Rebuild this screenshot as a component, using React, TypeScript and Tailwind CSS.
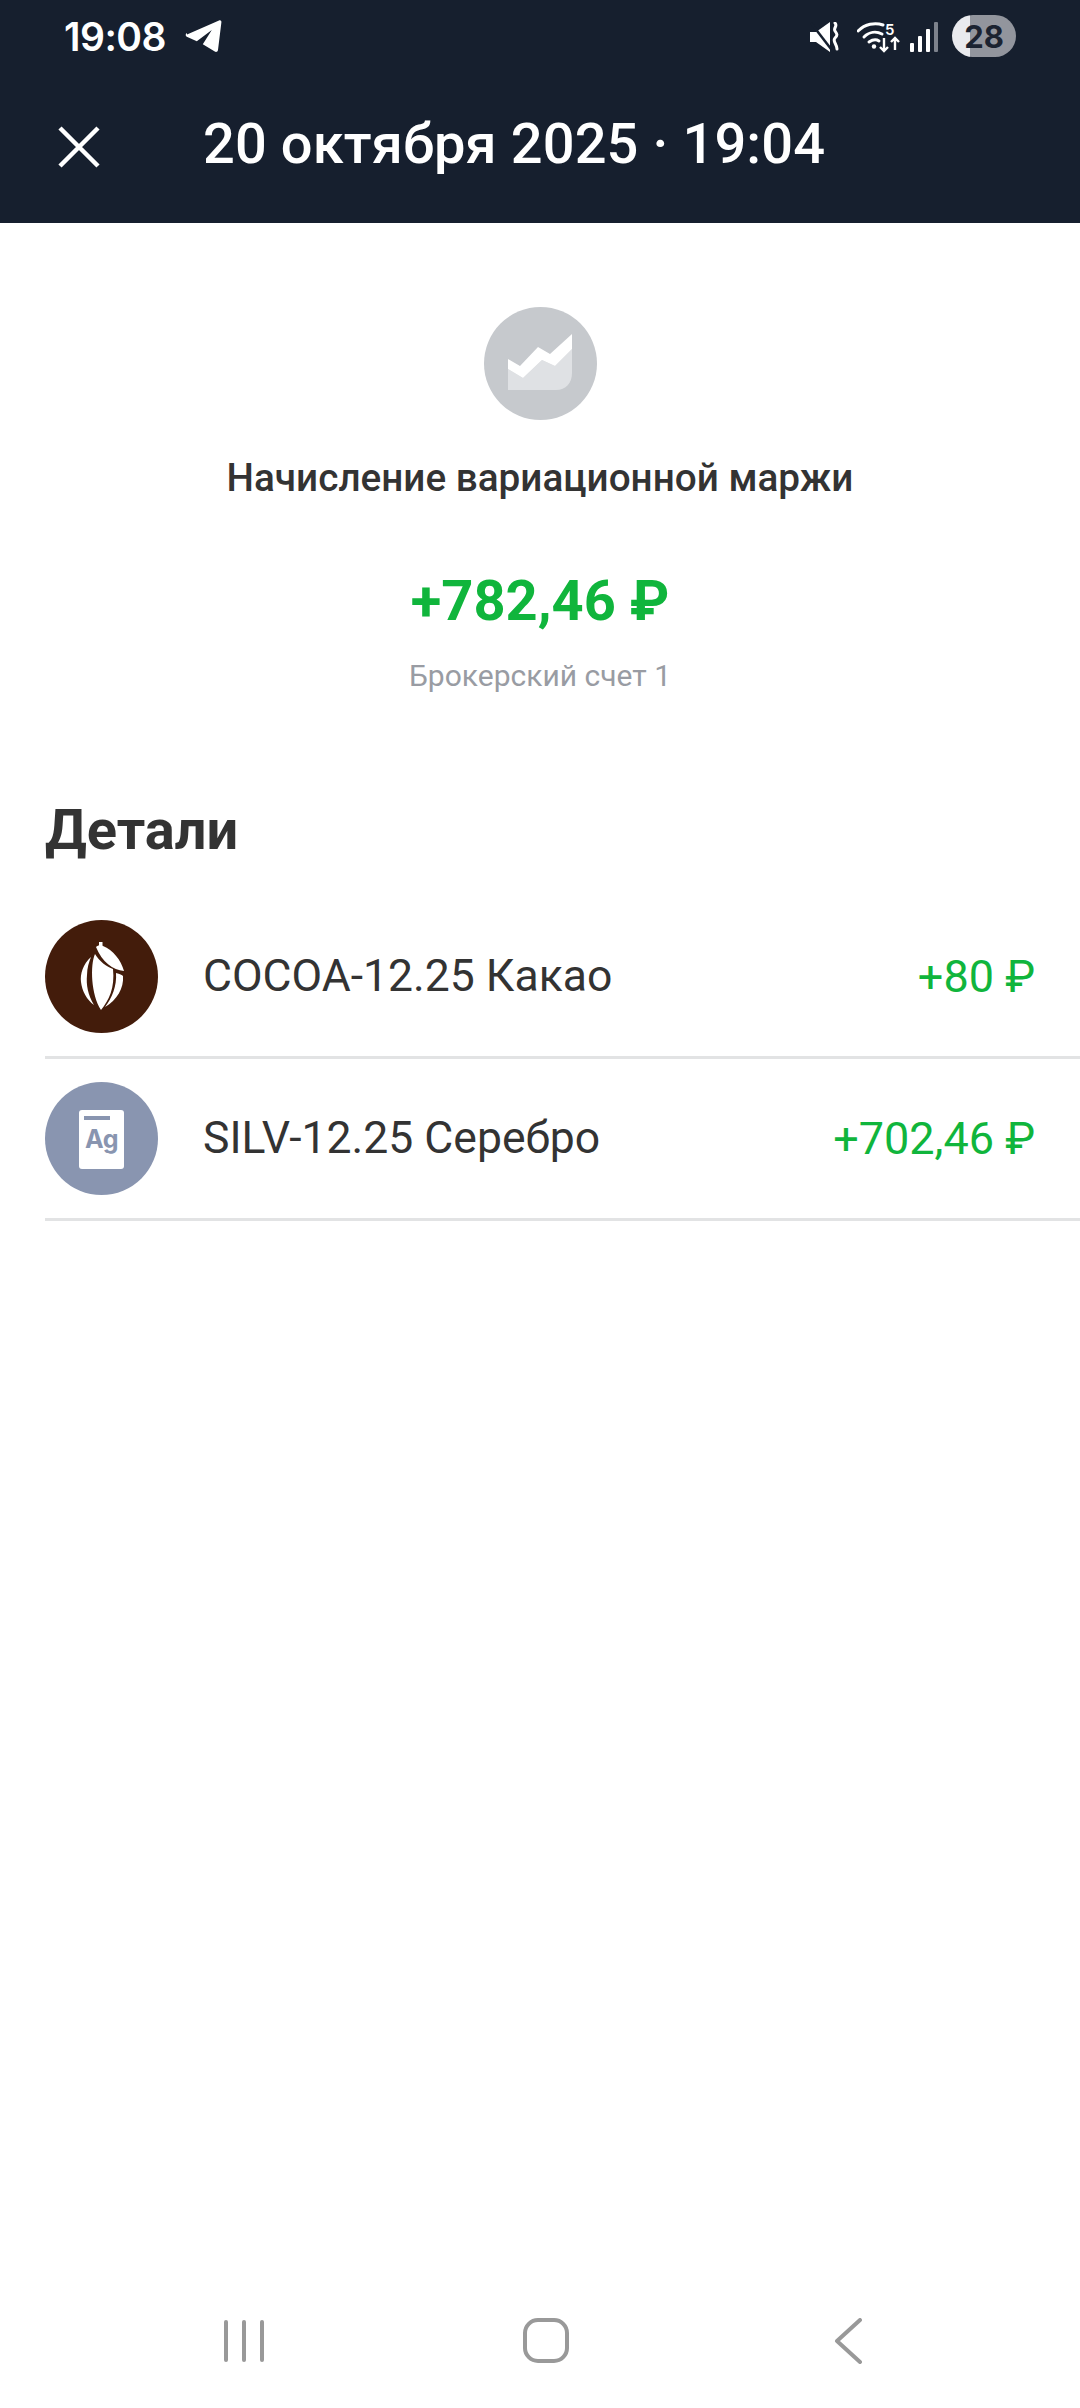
const FONT = "font-['Roboto','Noto_Sans',sans-serif]";

function StatusBar() {
  return (
    <div className="h-[72px] flex items-center justify-between pl-[64px] pr-[64px]">
      <div className="flex items-center gap-[19px]">
        <span className="font-['Inter',sans-serif] text-[39px] font-semibold leading-none text-white tracking-[-0.5px]">19:08</span>
        <svg width="37" height="34" viewBox="0 0 37 34">
          <path d="M2 15.5 34 1.5c1.4-.6 2.6.4 2.4 1.8L33 31c-.2 1.7-1.8 2.4-3.2 1.6l-12-7.4 9-14.2-15 11.3-10-4.6c-1.6-.8-1.4-3 .2-3.7Z" fill="#fff" />
        </svg>
      </div>
      <div className="flex items-center pt-[2px]">
        <svg width="30" height="30" viewBox="0 0 30 30" className="mr-[17px]" fill="none">
          <path d="M0 10h6L20 0v30L6 20H0Z" fill="#fff" />
          <path d="M1 1 21 27" stroke="#161f2e" strokeWidth="2.5" />
          <path d="M25 1c3 3-2 5 0 8s3 4 0 7 2 6 2 11" stroke="#fff" strokeWidth="3" strokeLinecap="round" />
        </svg>
        <div className="relative w-[43px] h-[32px] mr-[10px]">
          <svg width="43" height="32" viewBox="0 0 43 32" fill="none">
            <path d="M1 10c7-7 17-9 25-6" stroke="#fff" strokeWidth="3" strokeLinecap="round" />
            <path d="M7 16c5-5 12-6 18-3" stroke="#fff" strokeWidth="3" strokeLinecap="round" />
            <path d="M12 21c3-2 7-3 10-1" stroke="#fff" strokeWidth="3" strokeLinecap="round" />
            <circle cx="17" cy="25.5" r="2.2" fill="#fff" />
            <path d="M27 17v13M23 26l4 4 4-4M38 29V17M34 21l4-4 4 4" stroke="#fff" strokeWidth="2.4" />
          </svg>
          <span className="absolute left-[28px] top-[1px] font-['Inter',sans-serif] text-[15px] leading-[15px] font-semibold text-white">5</span>
        </div>
        <svg width="28" height="30" viewBox="0 0 28 30" className="mr-[14px]">
          <rect x="0" y="21" width="4" height="9" rx="1" fill="#fff" />
          <rect x="8" y="14" width="4" height="16" rx="1" fill="#fff" />
          <rect x="16" y="7" width="4" height="23" rx="1" fill="#fff" />
          <rect x="24" y="0" width="4" height="30" rx="1" fill="#7d828c" />
        </svg>
        <div className="w-[64px] h-[42px] -mt-[2px] rounded-full bg-[linear-gradient(90deg,#e9eaee_28%,#92959d_28%)] flex items-center justify-center">
          <span className="font-['Inter',sans-serif] text-[31px] font-bold leading-none text-[#1b2331]">28</span>
        </div>
      </div>
    </div>
  );
}

function Row({ name, value, icon }: { name: string; value: string; icon: React.ReactNode }) {
  return (
    <div className="ml-[45px] pr-[45px] h-[162px] border-b-[3px] border-[#e2e3e4] flex items-center">
      {icon}
      <span className="ml-[45px] flex-1 text-[44.5px] leading-none text-[#333333]">{name}</span>
      <span className="text-[45px] leading-none text-[#10b53c]">{value}</span>
    </div>
  );
}

function CocoaIcon() {
  return (
    <svg width="113" height="113" viewBox="0 0 113 113" className="shrink-0">
      <circle cx="56.5" cy="56.5" r="56.5" fill="#431c0b" />
      <path d="M50 34C45 45 46 75 56 90 64 80 70 68 68 49 62 47 54 41 50 34Z" fill="#fff" />
      <path d="M51 27C53 25 56 25 58 26 68 30 76 40 79 51 68 50 57 42 51 27Z" fill="#fff" />
      <rect x="54" y="22" width="3.5" height="6" fill="#fff" />
      <path d="M46 37C38 44 35 54 36 62 37 71 42 80 49 85 43 75 41 65 42 55 42 48 44 42 46 37Z" fill="#fff" />
      <path d="M71 53C75 54 77 55 78 56 79 68 72 80 60 87 67 78 72 66 71 53Z" fill="#fff" />
    </svg>
  );
}

function SilverIcon() {
  return (
    <div className="shrink-0 w-[113px] h-[113px] rounded-full bg-[#8995b0] flex items-center justify-center">
      <div className="w-[45px] h-[59px] mt-[2px] bg-white rounded-[3px] px-[5px] pt-[6px]">
        <div className="w-[26px] h-[4px] bg-[#8995b0]" />
        <div className="text-[25px] leading-none font-bold text-[#8995b0] text-center mt-[7px] -mx-[3px] font-['Inter',sans-serif] tracking-[-0.5px]">Ag</div>
      </div>
    </div>
  );
}

function NavBar() {
  return (
    <div className="h-[42px] mb-[46px] relative">
      <div className="absolute left-[224px] top-0 flex gap-[14px]">
        <div className="w-[4px] h-[42px] rounded-full bg-[#999999]" />
        <div className="w-[4px] h-[42px] rounded-full bg-[#999999]" />
        <div className="w-[4px] h-[42px] rounded-full bg-[#999999]" />
      </div>
      <div className="absolute left-[523px] top-[-2px] w-[46px] h-[45px] rounded-[15px] border-[4px] border-[#999999]" />
      <svg width="30" height="46" viewBox="0 0 30 46" className="absolute left-[833px] top-[-2px]" fill="none">
        <path d="M27 2 4 23l23 21" stroke="#999999" strokeWidth="4" strokeLinecap="round" strokeLinejoin="round" />
      </svg>
    </div>
  );
}

export default function App() {
  return (
    <div className={`w-[1080px] h-[2408px] bg-white flex flex-col ${FONT}`}>
      <div className="bg-[#161f2e] h-[223px] shrink-0">
        <StatusBar />
        <div className="flex items-center h-[144px] pl-[58px]">
          <svg width="42" height="42" viewBox="0 0 42 42" fill="none" className="shrink-0 mt-[6px]">
            <path d="M2 2l38 38M40 2 2 40" stroke="#fff" strokeWidth="4.5" />
          </svg>
          <span className="ml-[103px] text-[56px] font-medium leading-none text-white tracking-[0.1px]">20 октября 2025 · 19:04</span>
        </div>
      </div>

      <div className="flex-1 flex flex-col">
        <div className="flex flex-col items-center pt-[84px]">
          <svg width="113" height="113" viewBox="0 0 113 113">
            <circle cx="56.5" cy="56.5" r="56.5" fill="#c6c9cd" />
            <path d="M24 62 39 71 58 53 71 59 88 42V66C88 76 82 83 72 83H24Z" fill="#dfe1e4" />
            <path d="M24 52 36 59 54 40 66 47 88 27V42L71 59 58 53 39 71 24 62Z" fill="#fff" />
          </svg>
          <div className="mt-[34px] text-[38.7px] font-medium leading-[48px] text-[#333333]">Начисление вариационной маржи</div>
          <div className="mt-[67px] text-[56px] font-bold leading-[64px] text-[#10b53c]">+782,46 ₽</div>
          <div className="mt-[25px] text-[30px] leading-[36px] text-[#999ca3]">Брокерский счет 1</div>
        </div>

        <div className="mt-[104px] pl-[45px] text-[56px] font-bold leading-[64px] text-[#333333]">Детали</div>
        <div className="mt-[35px]">
          <Row name="COCOA-12.25 Какао" value="+80 ₽" icon={<CocoaIcon />} />
          <Row name="SILV-12.25 Серебро" value="+702,46 ₽" icon={<SilverIcon />} />
        </div>
      </div>

      <NavBar />
    </div>
  );
}
